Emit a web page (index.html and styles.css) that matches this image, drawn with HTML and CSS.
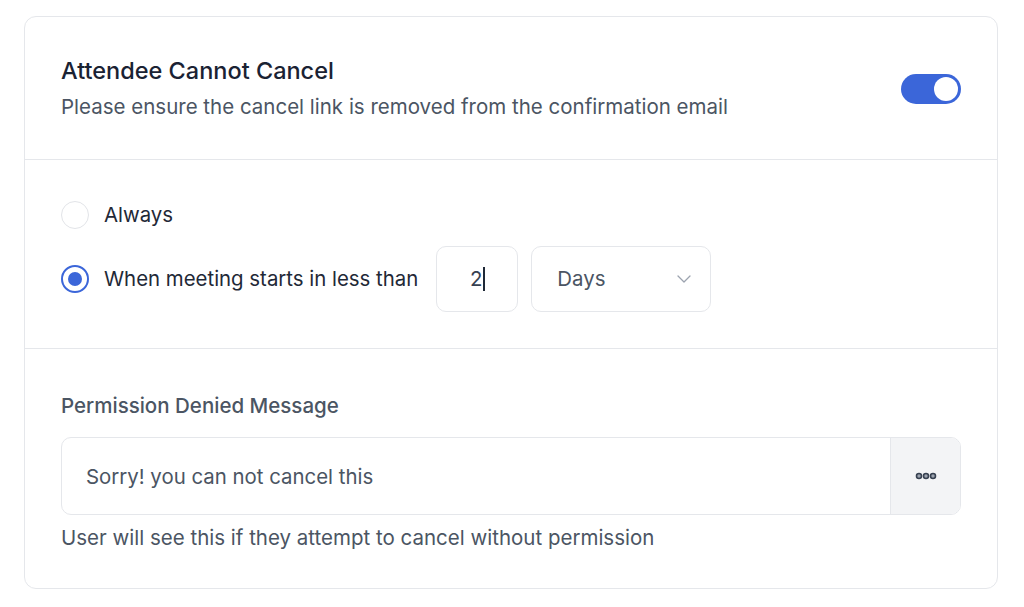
FILE: index.html
```html
<!DOCTYPE html>
<html>

<head>
  <title>Cancellation Rules</title>
  <link rel="stylesheet" href="styles.css">
</head>

<body>
  <div class="card">
    <div class="card-header">
      <div>
        <h2 class="title">Attendee Cannot Cancel</h2>
        <p class="subtitle">Please ensure the cancel link is removed from the confirmation email</p>
      </div>
      <span class="toggle on"><span class="knob"></span></span>
    </div>

    <div class="section options">
      <label class="radio-row">
        <span class="radio"></span>
        <span>Always</span>
      </label>
      <label class="radio-row">
        <span class="radio checked"></span>
        <span>When meeting starts in less than</span>
        <span class="num-box">2<span class="caret"></span></span>
        <span class="select-box">
          Days
          <svg width="16" height="10" viewBox="0 0 16 10" fill="none">
            <path d="M2 2 8 8l6-6" stroke="#9ca3af" stroke-width="1.3" stroke-linecap="round" stroke-linejoin="round" />
          </svg>
        </span>
      </label>
    </div>

    <div class="section message">
      <div class="field-label">Permission Denied Message</div>
      <div class="input-group">
        <div class="input-text">Sorry! you can not cancel this</div>
        <div class="addon">
          <svg width="22" height="8" viewBox="0 0 22 8">
            <circle cx="4" cy="4" r="2.5" fill="#9ca3af" stroke="#374151" stroke-width="1.6" />
            <circle cx="11" cy="4" r="2.5" fill="#9ca3af" stroke="#374151" stroke-width="1.6" />
            <circle cx="18" cy="4" r="2.5" fill="#9ca3af" stroke="#374151" stroke-width="1.6" />
          </svg>
        </div>
      </div>
      <p class="help">User will see this if they attempt to cancel without permission</p>
    </div>
  </div>
</body>

</html>
```

FILE: styles.css
```css
body {
  font-family: Inter, "Noto Sans", sans-serif;
  background-color: #fff;
  margin: 0;
  padding: 0;
  color: #1f2937;
}

.card {
  margin: 16px 26px 0 24px;
  border: 1px solid #e5e7eb;
  border-radius: 12px;
  background-color: #fff;
}

.card-header {
  display: flex;
  align-items: center;
  justify-content: space-between;
  padding: 39px 36px 38px 36px;
  border-bottom: 1px solid #e5e7eb;
}

.title {
  margin: 0;
  font-size: 23.5px;
  line-height: 30px;
  font-weight: 500;
  color: #1a2233;
}

.subtitle {
  margin: 7px 0 0 0;
  font-size: 20.5px;
  line-height: 28px;
  color: #4b5563;
}

.toggle {
  width: 60px;
  height: 30px;
  border-radius: 15px;
  background-color: #3b66d9;
  display: flex;
  align-items: center;
  justify-content: flex-end;
  padding: 0 3px;
  box-sizing: border-box;
}

.knob {
  width: 24px;
  height: 24px;
  border-radius: 50%;
  background-color: #fff;
}

.section {
  padding: 0 36px;
}

.options {
  padding-top: 40px;
  padding-bottom: 36px;
  display: flex;
  flex-direction: column;
  gap: 16px;
  border-bottom: 1px solid #e5e7eb;
}

.radio-row {
  display: flex;
  align-items: center;
  font-size: 20.4px;
  line-height: 30px;
  color: #1f2937;
}

.radio {
  width: 28px;
  height: 28px;
  border-radius: 50%;
  border: 1.5px solid #e2e4e8;
  box-sizing: border-box;
  margin-right: 15px;
  display: flex;
  align-items: center;
  justify-content: center;
}

.radio.checked {
  border: 2px solid #3b66d9;
}

.radio.checked::after {
  content: "";
  width: 14px;
  height: 14px;
  border-radius: 50%;
  background-color: #3b66d9;
}

.num-box,
.select-box {
  height: 66px;
  box-sizing: border-box;
  border: 1px solid #e5e7eb;
  border-radius: 10px;
  display: flex;
  align-items: center;
  color: #374151;
}

.num-box {
  width: 82px;
  margin-left: 18px;
  justify-content: center;
}

.caret {
  width: 1.5px;
  height: 24px;
  background-color: #1f2937;
  margin-left: 1px;
}

.select-box {
  width: 180px;
  margin-left: 13px;
  padding: 0 18px 0 25px;
  justify-content: space-between;
  color: #4b5563;
}

.message {
  padding-top: 43px;
  padding-bottom: 36px;
}

.field-label {
  font-size: 20.5px;
  line-height: 28px;
  font-weight: 500;
  color: #4b5563;
}

.input-group {
  margin-top: 17px;
  display: flex;
  height: 76px;
  border: 1px solid #e5e7eb;
  border-radius: 10px;
  overflow: hidden;
}

.input-text {
  flex: 1;
  display: flex;
  align-items: center;
  padding-left: 24px;
  font-size: 20.4px;
  color: #4b5563;
}

.addon {
  width: 69px;
  background-color: #f3f4f6;
  border-left: 1px solid #e5e7eb;
  display: flex;
  align-items: center;
  justify-content: center;
}

.help {
  margin: 9px 0 0 0;
  font-size: 20.5px;
  line-height: 28px;
  color: #4b5563;
}
```
